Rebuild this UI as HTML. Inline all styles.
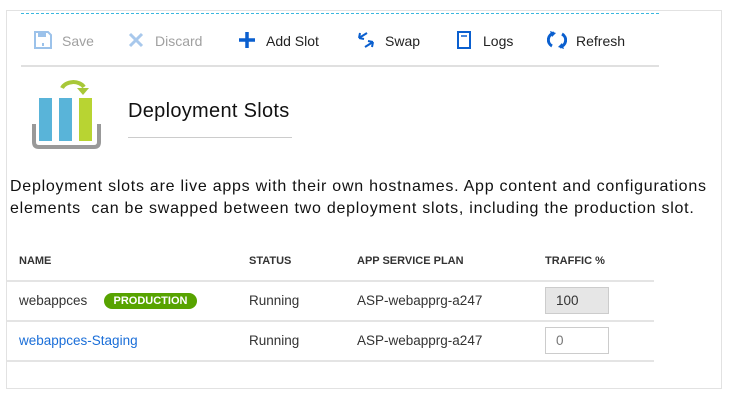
<!DOCTYPE html>
<html><head><style>
body{margin:0;width:739px;height:401px;background:#fff;font-family:"Liberation Sans",sans-serif;position:relative;overflow:hidden}
.a{position:absolute;white-space:nowrap}
.tb{font-size:14px;color:#222;top:33px}
.dis{color:#a0a0a0}
.h{font-size:11px;font-weight:bold;color:#333;top:255px}
.c{font-size:13.5px;color:#333}
</style></head><body>
<div class="a" style="left:6px;top:10px;width:714px;height:377px;border:1px solid #e2e2e2"></div>
<div class="a" style="left:21px;top:13px;width:638px;border-top:1px dashed #3ab8e0"></div>
<div class="a" style="left:21px;top:65px;width:638px;border-top:2px solid #e0e0e0"></div>
<svg class="a" style="left:34px;top:31px" width="18" height="18" viewBox="0 0 18 18"><path d="M1 1h13l3 3v13H1z" fill="none" stroke="#9cc2ea" stroke-width="2"/><rect x="4" y="2" width="8" height="4" fill="#9cc2ea"/><rect x="8" y="12" width="2" height="3" fill="#9cc2ea"/></svg>
<div class="a tb dis" style="left:62px">Save</div>
<svg class="a" style="left:128px;top:32px" width="16" height="16"><path d="M2 2L14 14M14 2L2 14" stroke="#a8c8ec" stroke-width="3"/></svg>
<div class="a tb dis" style="left:155px">Discard</div>
<svg class="a" style="left:238px;top:31px" width="18" height="18"><path d="M9 1V17M1 9H17" stroke="#0a5fcf" stroke-width="3.5"/></svg>
<div class="a tb" style="left:266px">Add Slot</div>
<svg class="a" style="left:357px;top:31px" width="18" height="18"><path d="M2 7L10 2M2 7L3 2M2 7L7 8M16 11L8 16M16 11L15 16M16 11L11 10" stroke="#0a5fcf" stroke-width="2" fill="none"/></svg>
<div class="a tb" style="left:385px">Swap</div>
<svg class="a" style="left:457px;top:31px" width="14" height="18"><rect x="1" y="1" width="12" height="16" fill="none" stroke="#0a5fcf" stroke-width="2"/><path d="M4 5H10" stroke="#0a5fcf" stroke-width="1.5"/></svg>
<div class="a tb" style="left:483px">Logs</div>
<svg class="a" style="left:547px;top:30px" width="20" height="20" viewBox="0 0 20 20"><path d="M7 3A7 7 0 0 0 5 16M13 17A7 7 0 0 0 15 4" stroke="#0a5fcf" stroke-width="3" fill="none"/><path d="M3 1L9 3L5 7zM17 19L11 17L15 13z" fill="#0a5fcf"/></svg>
<div class="a tb" style="left:576px">Refresh</div>
<svg class="a" style="left:30px;top:76px" width="74" height="74" viewBox="0 0 74 74"><path d="M32 12A12 9 0 0 1 54 11" stroke="#a8c838" stroke-width="4" fill="none"/><path d="M47 12L59 12L53 19z" fill="#a8c838"/><rect x="9" y="22" width="13" height="43" fill="#59b4d9"/><rect x="29" y="22" width="13" height="43" fill="#59b4d9"/><rect x="49" y="22" width="13" height="43" fill="#b8d432"/><path d="M4 48V66Q4 71 9 71H64Q69 71 69 66V48" stroke="#999" stroke-width="4" fill="none"/></svg>
<div class="a" style="left:128px;top:100px;font-size:20px;color:#111;letter-spacing:0.3px">Deployment Slots</div>
<div class="a" style="left:128px;top:137px;width:164px;border-top:1px solid #ccc"></div>
<div class="a" style="left:10px;top:176px;font-size:16px;color:#111;line-height:22px;letter-spacing:0.75px">Deployment slots are live apps with their own hostnames. App content and configurations<br>elements &nbsp;can be swapped between two deployment slots, including the production slot.</div>
<div class="a h" style="left:19px">NAME</div>
<div class="a h" style="left:249px">STATUS</div>
<div class="a h" style="left:357px">APP SERVICE PLAN</div>
<div class="a h" style="left:545px">TRAFFIC %</div>
<div class="a" style="left:7px;top:280px;width:647px;border-top:2px solid #e4e4e4"></div>
<div class="a" style="left:7px;top:320px;width:647px;border-top:2px solid #e4e4e4"></div>
<div class="a" style="left:7px;top:360px;width:647px;border-top:2px solid #e4e4e4"></div>
<div class="a c" style="left:19px;top:293px">webappces</div>
<div class="a" style="left:104px;top:293px;width:93px;height:16px;border-radius:8px;background:#57a300;color:#fff;font-size:11px;font-weight:bold;text-align:center;line-height:16px">PRODUCTION</div>
<div class="a c" style="left:249px;top:293px">Running</div>
<div class="a c" style="left:357px;top:293px">ASP-webapprg-a247</div>
<div class="a c" style="left:545px;top:287px;width:52px;height:25px;border:1px solid #ccc;background:#e6e6e6;padding-left:10px;line-height:25px">100</div>
<div class="a c" style="left:19px;top:333px;color:#1a6ed8">webappces-Staging</div>
<div class="a c" style="left:249px;top:333px">Running</div>
<div class="a c" style="left:357px;top:333px">ASP-webapprg-a247</div>
<div class="a c" style="left:545px;top:327px;width:52px;height:25px;border:1px solid #ccc;background:#fff;padding-left:10px;line-height:25px;color:#777">0</div>
</body></html>
